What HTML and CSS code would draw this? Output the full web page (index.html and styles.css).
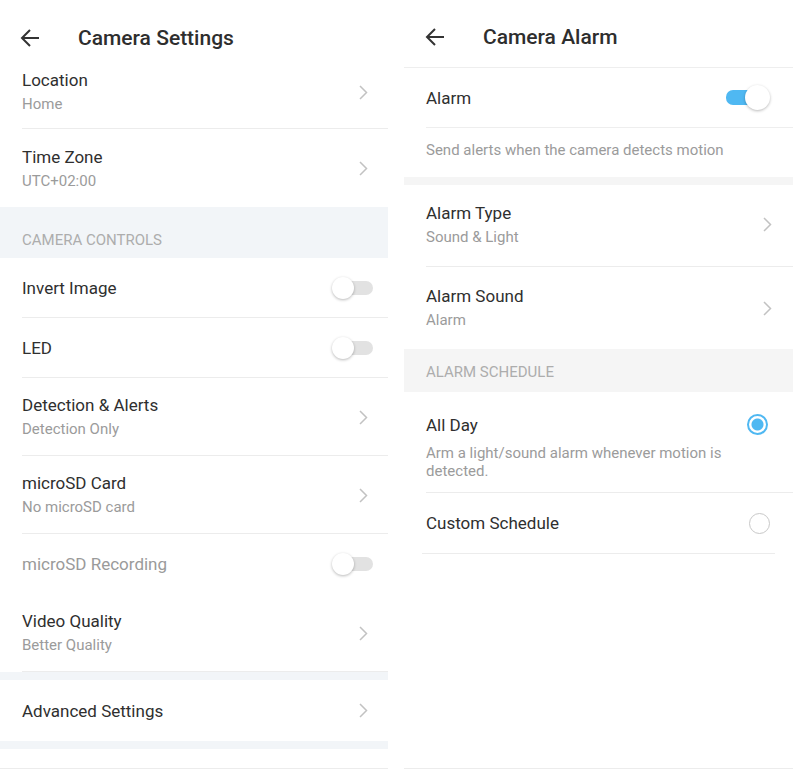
FILE: index.html
```
<!DOCTYPE html>
<html>
<head>
<meta charset="utf-8">
<link rel="stylesheet" href="styles.css">
</head>
<body>
<div class="screen">
  <section class="panel left">
    <header class="hdr">
      <svg class="back" width="20" height="18" viewBox="0 0 20 18"><path d="M19 9H2M10 1L2 9l8 8" fill="none" stroke="#333" stroke-width="2" stroke-linejoin="miter"/></svg>
      <h1 class="title">Camera Settings</h1>
    </header>
    <div class="item two first line">
      <div class="txt"><div class="t">Location</div><div class="s">Home</div></div>
      <svg class="chev" width="9" height="15" viewBox="0 0 9 15"><path d="M1 1l6.5 6.5L1 14" fill="none" stroke="#c2c2c2" stroke-width="1.5"/></svg>
    </div>
    <div class="item two">
      <div class="txt"><div class="t">Time Zone</div><div class="s">UTC+02:00</div></div>
      <svg class="chev" width="9" height="15" viewBox="0 0 9 15"><path d="M1 1l6.5 6.5L1 14" fill="none" stroke="#c2c2c2" stroke-width="1.5"/></svg>
    </div>
    <div class="band band-l section">CAMERA CONTROLS</div>
    <div class="item one line">
      <div class="t">Invert Image</div>
      <span class="switch"><span class="track"></span><span class="knob"></span></span>
    </div>
    <div class="item one line">
      <div class="t">LED</div>
      <span class="switch"><span class="track"></span><span class="knob"></span></span>
    </div>
    <div class="item two line">
      <div class="txt"><div class="t">Detection &amp; Alerts</div><div class="s">Detection Only</div></div>
      <svg class="chev" width="9" height="15" viewBox="0 0 9 15"><path d="M1 1l6.5 6.5L1 14" fill="none" stroke="#c2c2c2" stroke-width="1.5"/></svg>
    </div>
    <div class="item two line">
      <div class="txt"><div class="t">microSD Card</div><div class="s">No microSD card</div></div>
      <svg class="chev" width="9" height="15" viewBox="0 0 9 15"><path d="M1 1l6.5 6.5L1 14" fill="none" stroke="#c2c2c2" stroke-width="1.5"/></svg>
    </div>
    <div class="item one noline">
      <div class="t dis">microSD Recording</div>
      <span class="switch"><span class="track"></span><span class="knob"></span></span>
    </div>
    <div class="item two line">
      <div class="txt"><div class="t">Video Quality</div><div class="s">Better Quality</div></div>
      <svg class="chev" width="9" height="15" viewBox="0 0 9 15"><path d="M1 1l6.5 6.5L1 14" fill="none" stroke="#c2c2c2" stroke-width="1.5"/></svg>
    </div>
    <div class="band band-l gap"></div>
    <div class="item adv">
      <div class="t">Advanced Settings</div>
      <svg class="chev" width="9" height="15" viewBox="0 0 9 15"><path d="M1 1l6.5 6.5L1 14" fill="none" stroke="#c2c2c2" stroke-width="1.5"/></svg>
    </div>
    <div class="band band-l gap"></div>
    <div class="fill"></div>
  </section>

  <section class="panel right">
    <header class="hdr hdr-r">
      <svg class="back" width="20" height="18" viewBox="0 0 20 18"><path d="M19 9H2M10 1L2 9l8 8" fill="none" stroke="#333" stroke-width="2" stroke-linejoin="miter"/></svg>
      <h1 class="title">Camera Alarm</h1>
    </header>
    <div class="item one line r">
      <div class="t">Alarm</div>
      <span class="switch on"><span class="track"></span><span class="knob"></span></span>
    </div>
    <div class="desc r">Send alerts when the camera detects motion</div>
    <div class="band band-r gap"></div>
    <div class="item tworr line r">
      <div class="txt"><div class="t">Alarm Type</div><div class="s">Sound &amp; Light</div></div>
      <svg class="chev" width="9" height="15" viewBox="0 0 9 15"><path d="M1 1l6.5 6.5L1 14" fill="none" stroke="#c2c2c2" stroke-width="1.5"/></svg>
    </div>
    <div class="item tworr r snd">
      <div class="txt"><div class="t">Alarm Sound</div><div class="s">Alarm</div></div>
      <svg class="chev" width="9" height="15" viewBox="0 0 9 15"><path d="M1 1l6.5 6.5L1 14" fill="none" stroke="#c2c2c2" stroke-width="1.5"/></svg>
    </div>
    <div class="band band-r section-r">ALARM SCHEDULE</div>
    <div class="item opt line r">
      <div class="txt narrow"><div class="t">All Day</div><div class="s2">Arm a light/sound alarm whenever motion is detected.</div></div>
      <span class="radio sel"></span>
    </div>
    <div class="item one r custom">
      <div class="t">Custom Schedule</div>
      <span class="radio"></span>
    </div>
    <div class="rule"></div>
    <div class="fill"></div>
  </section>
</div>
</body>
</html>
```
FILE: styles.css
```
* { box-sizing: border-box; margin: 0; padding: 0; }
html, body { background: #fff; }
body {
  font-family: Roboto, "Noto Sans", "Liberation Sans", sans-serif;
  color: #333;
  width: 800px;
  height: 770px;
  overflow: hidden;
}
.screen {
  display: flex;
  gap: 16px;
  height: 770px;
}
.panel {
  display: flex;
  flex-direction: column;
  height: 770px;
}
.left { width: 388px; }
.right { width: 389px; }

.hdr {
  display: flex;
  align-items: center;
  height: 53px;
  padding: 26px 0 3px 20px;
}
.hdr .title {
  font-size: 21px;
  font-weight: 500;
  line-height: 24px;
  color: #2e2e2e;
  margin-left: 38px;
}
.hdr-r {
  height: 68px;
  padding: 25px 0 19px 21px;
  border-bottom: 1px solid #eeeeee;
}
.hdr-r .title { margin-left: 38px; }
.back { flex: none; display: block; }

.item {
  display: flex;
  align-items: center;
  justify-content: space-between;
  margin-left: 22px;
}
.item.line { border-bottom: 1px solid #ececec; }
.item.noline { border-bottom: 1px solid transparent; }
.t {
  font-size: 17px;
  line-height: 24px;
  color: #2f2f2f;
}
.t.dis { color: #9a9a9a; }
.s {
  font-size: 15px;
  line-height: 24px;
  color: #9b9b9b;
}
.s2 {
  font-size: 15px;
  line-height: 18px;
  color: #9b9b9b;
  margin-top: 7px;
}
.two { height: 78px; padding: 15px 20px 14px 0; }
.two.first { height: 76px; padding: 15px 20px 12px 0; }
.one { height: 60px; padding: 0 15px 0 0; }
.adv { height: 61px; padding: 0 20px 0 0; }
.chev { flex: none; display: block; }

.band { flex: none; }
.band-l { background: #f2f5f8; }
.band-r { background: #f5f5f5; }
.gap { height: 8px; }
.section {
  height: 51px;
  padding: 23px 0 0 22px;
  font-size: 15px;
  line-height: 20px;
  color: #adadad;
}
.section-r {
  height: 43px;
  padding: 13px 0 0 22px;
  font-size: 15px;
  line-height: 20px;
  color: #adadad;
}
.fill {
  flex: 1;
  border-bottom: 1px solid #ececec;
  margin-bottom: 1px;
}

.switch {
  position: relative;
  flex: none;
  width: 41px;
  height: 22px;
  display: block;
}
.switch .track {
  position: absolute;
  right: 0;
  top: 4px;
  width: 32px;
  height: 14px;
  border-radius: 7px;
  background: #e2e2e2;
}
.switch .knob {
  position: absolute;
  left: 0;
  top: 0;
  width: 22px;
  height: 22px;
  border-radius: 50%;
  background: #fff;
  box-shadow: 0 1px 3px rgba(0,0,0,0.28);
}
.switch.on { width: 44px; height: 25px; }
.switch.on .track {
  left: 0;
  right: auto;
  top: 5px;
  width: 34px;
  height: 15px;
  background: #4fb8f2;
}
.switch.on .knob {
  left: auto;
  right: 0;
  width: 25px;
  height: 25px;
}

.r { margin-left: 22px; }
.right .one { padding-right: 23px; }
.right .one.line { border-bottom-color: #eeeeee; }
.desc {
  height: 49px;
  padding-top: 12px;
  font-size: 15px;
  line-height: 20px;
  color: #9b9b9b;
}
.tworr { height: 82px; padding: 16px 21px 18px 0; }
.tworr.snd { height: 82px; padding: 17px 21px 17px 0; }
.opt {
  height: 101px;
  align-items: flex-start;
  padding: 21px 25px 0 0;
}
.narrow { width: 320px; }
.custom { height: 60px; }
.radio {
  flex: none;
  display: block;
  width: 21px;
  height: 21px;
  border-radius: 50%;
  border: 1.5px solid #c8c8c8;
  background: #fff;
}
.opt .radio { margin-top: 1px; }
.radio.sel {
  border: 2px solid #4fb8f2;
  background: radial-gradient(circle, #4fb8f2 0, #4fb8f2 5.5px, #fff 6.5px);
}
.rule {
  height: 1px;
  background: #ececec;
  margin: 0 18px 0 18px;
}
```
